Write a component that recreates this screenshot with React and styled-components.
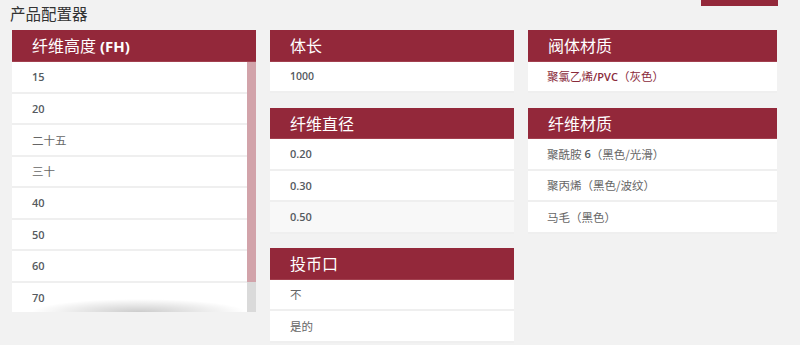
import React from "react";
import styled, { createGlobalStyle } from "styled-components";

const Global = createGlobalStyle`
  html, body { margin: 0; padding: 0; background: #f2f2f2; }
  body {
    font-family: "Open Sans", "Noto Sans CJK SC", sans-serif;
    width: 800px; height: 345px; overflow: hidden;
  }
`;

const RED = "#93283a";

const Page = styled.div`
  width: 800px;
  height: 345px;
  background: #f2f2f2;
`;

const TopBar = styled.div`
  height: 30px;
  display: flex;
  justify-content: space-between;
  align-items: flex-start;
  padding: 0 22px 0 10px;
  box-sizing: border-box;
`;

const Title = styled.h1`
  margin: 0;
  font-family: "Noto Sans CJK SC", sans-serif;
  font-weight: 400;
  font-size: 15.5px;
  line-height: 26px;
  color: #333;
`;

const TopButton = styled.div`
  width: 77px;
  height: 6px;
  background: ${RED};
`;

const Columns = styled.div`
  display: grid;
  grid-template-columns: 244px 244px 249px;
  column-gap: 14px;
  padding-left: 12px;
  align-items: start;
`;

const Column = styled.div`
  display: flex;
  flex-direction: column;
  gap: 14.5px;
`;

const Panel = styled.section`
  position: relative;
  display: flex;
  flex-direction: column;
  ${(p) =>
    p.$shadow &&
    `
    &::after {
      content: "";
      position: absolute;
      left: 8%;
      right: 4%;
      bottom: 0;
      height: 13px;
      background: radial-gradient(ellipse 50% 100% at 50% 100%, rgba(0,0,0,0.2), rgba(0,0,0,0) 100%);
      pointer-events: none;
    }
  `}
`;

const PanelHead = styled.h2`
  margin: 0;
  height: ${(p) => p.$h || 31.5}px;
  box-sizing: border-box;
  background: ${RED};
  border-bottom: 1px solid #a2404f;
  color: #fff;
  font-family: "Noto Sans CJK SC", sans-serif;
  font-weight: 400;
  font-size: 16px;
  line-height: ${(p) => (p.$h || 31.5) - 1}px;
  padding-left: 20px;
  white-space: nowrap;
`;

const HeadLatin = styled.span`
  font-family: "Open Sans", sans-serif;
  font-weight: 700;
  font-size: 15px;
  margin-left: 4px;
`;

const ScrollBox = styled.div`
  display: flex;
  height: 250px;
  overflow: hidden;
`;

const List = styled.ul`
  list-style: none;
  margin: 0;
  padding: 0;
  flex: 1;
  min-width: 0;
`;

const Row = styled.li`
  height: 31.5px;
  box-sizing: border-box;
  border-bottom: 2px solid #efefef;
  background: ${(p) => (p.$hover ? "#f8f8f8" : "#fff")};
  padding-left: ${(p) => p.$pad || 20}px;
  display: flex;
  align-items: center;
  font-family: "Noto Sans CJK SC", sans-serif;
  font-size: 11.5px;
  color: ${(p) => (p.$selected ? "#8a2a3b" : "#666")};
  white-space: nowrap;
`;

const Num = styled.span`
  font-family: "Open Sans", sans-serif;
  font-weight: 600;
  font-size: ${(p) => p.$size || 11}px;
  color: ${(p) => (p.$inherit ? "inherit" : "#555a60")};
  margin-left: ${(p) => p.$gap || 0}px;
`;

const Track = styled.div`
  width: 9px;
  flex: none;
  background: #dadada;
  display: flex;
  flex-direction: column;
`;

const Thumb = styled.div`
  width: 100%;
  background: #d2a3aa;
`;

const isNum = (s) => /^[0-9.]+$/.test(s);

const Cell = ({ text }) =>
  isNum(text) ? <Num $size={text === "1000" ? 10.5 : 11}>{text}</Num> : text;

const heights = ["15", "20", "二十五", "三十", "40", "50", "60", "70"];
const totalHeightOptions = 9;

export default function App() {
  const visible = 250;
  const content = totalHeightOptions * 31.5;
  const thumb = (visible / content) * visible;
  return (
    <Page>
      <Global />
      <TopBar>
        <Title>产品配置器</Title>
        <TopButton />
      </TopBar>
      <Columns>
        <Column>
          <Panel $shadow>
            <PanelHead $h={32}>
              纤维高度<HeadLatin>(FH)</HeadLatin>
            </PanelHead>
            <ScrollBox>
              <List>
                {heights.map((h) => (
                  <Row key={h}>
                    <Cell text={h} />
                  </Row>
                ))}
              </List>
              <Track>
                <Thumb style={{ height: `${thumb}px` }} />
              </Track>
            </ScrollBox>
          </Panel>
        </Column>

        <Column>
          <Panel>
            <PanelHead>体长</PanelHead>
            <List>
              <Row>
                <Cell text="1000" />
              </Row>
            </List>
          </Panel>
          <Panel>
            <PanelHead>纤维直径</PanelHead>
            <List>
              <Row>
                <Cell text="0.20" />
              </Row>
              <Row>
                <Cell text="0.30" />
              </Row>
              <Row $hover>
                <Cell text="0.50" />
              </Row>
            </List>
          </Panel>
          <Panel>
            <PanelHead>投币口</PanelHead>
            <List>
              <Row>不</Row>
              <Row>是的</Row>
            </List>
          </Panel>
        </Column>

        <Column>
          <Panel>
            <PanelHead>阀体材质</PanelHead>
            <List>
              <Row $selected $pad={19}>
                聚氯乙烯<Num $inherit>/PVC</Num>（灰色）
              </Row>
            </List>
          </Panel>
          <Panel>
            <PanelHead>纤维材质</PanelHead>
            <List>
              <Row $pad={19}>
                聚酰胺<Num $gap={3}>6</Num>（黑色/光滑）
              </Row>
              <Row $pad={19}>聚丙烯（黑色/波纹）</Row>
              <Row $pad={19}>马毛（黑色）</Row>
            </List>
          </Panel>
        </Column>
      </Columns>
    </Page>
  );
}
